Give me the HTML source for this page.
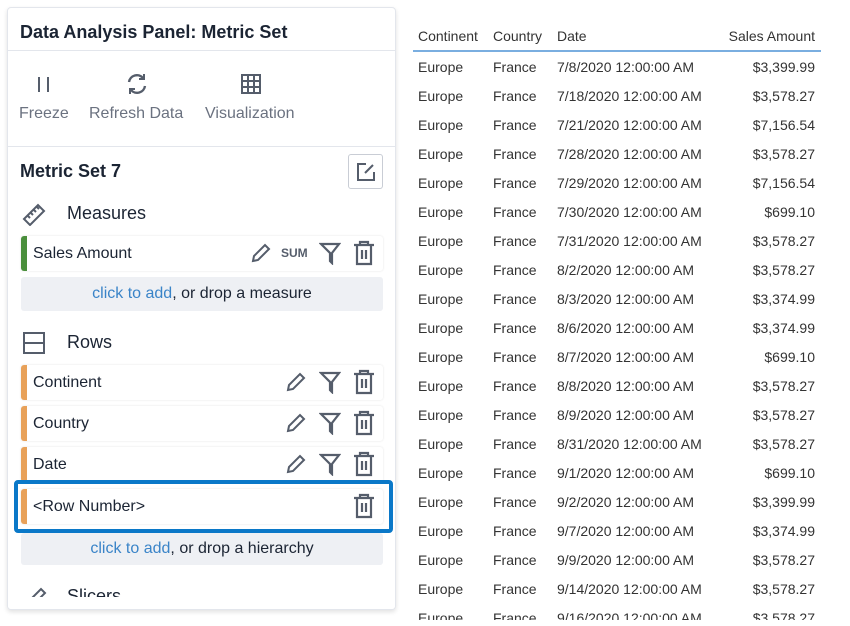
<!DOCTYPE html>
<html><head><style>
*{margin:0;padding:0;box-sizing:border-box}
body{width:850px;height:626px;background:#fff;font-family:"Liberation Sans",sans-serif;position:relative;overflow:hidden;color:#1b2433}
.a{position:absolute;white-space:nowrap}
.panel{position:absolute;left:7px;top:7px;width:389px;height:603px;border:1px solid #e3e6ec;border-radius:4px;background:#fff;box-shadow:0 2px 5px rgba(0,0,0,.12);overflow:hidden}
.item{position:absolute;left:13px;width:362px;height:35px;background:#fff;border-radius:3px;box-shadow:0 0 2px rgba(0,0,0,.12)}
.item .bar{position:absolute;left:0;top:0;width:6px;height:100%;border-radius:3px 0 0 3px;background:#e8a159}
.item .t{position:absolute;left:12px;top:9px;font-size:16px}
.add{position:absolute;left:13px;width:362px;height:34px;background:#eef0f4;border-radius:3px;text-align:center;font-size:16px;line-height:34px;color:#1b2433}
.add span{color:#3a84c8}
.ic{position:absolute}
.tbl td,.tbl th{font-size:14px;color:#333;font-weight:normal;height:29px;padding:0}
</style></head><body>
<div class="panel">
<div class="a" style="left:12px;top:14px;font-size:18px;font-weight:bold">Data Analysis Panel: Metric Set</div>
<div class="a" style="left:0;top:42px;width:389px;height:1px;background:#e3e6ec"></div>
<svg class="ic" style="left:28px;top:68px" width="16" height="18"><path d="M3 1v15M12 1v15" stroke="#555d6b" stroke-width="2"/></svg>
<svg class="ic" style="left:117px;top:64px" width="24" height="24" viewBox="0 0 24 24" fill="none" stroke="#555d6b" stroke-width="2.4"><path d="M4 10a8 8 0 0 1 14-4M20 14a8 8 0 0 1-14 4"/><path d="M19 2v5h-5M5 22v-5h5" stroke-width="2"/></svg>
<svg class="ic" style="left:232px;top:65px" width="22" height="22" viewBox="0 0 22 22" fill="none" stroke="#555d6b" stroke-width="2"><rect x="2" y="2" width="18" height="18"/><path d="M8 2v18M14 2v18M2 8h18M2 14h18"/></svg>
<div class="a" style="left:11px;top:97px;font-size:16px;color:#6b7280">Freeze</div>
<div class="a" style="left:81px;top:97px;font-size:16px;color:#6b7280">Refresh Data</div>
<div class="a" style="left:197px;top:97px;font-size:16px;color:#6b7280">Visualization</div>
<div class="a" style="left:0;top:138px;width:389px;height:1px;background:#e3e6ec"></div>
<div class="a" style="left:12px;top:153px;font-size:18px;font-weight:bold">Metric Set 7</div>
<div class="a" style="left:340px;top:146px;width:35px;height:35px;border:1px solid #c9cdd5;border-radius:3px"></div>
<svg class="ic" style="left:347px;top:153px" width="22" height="22" viewBox="0 0 22 22" fill="none" stroke="#555d6b" stroke-width="2"><path d="M11 3H3v16h16v-8"/><path d="M10 12l8-8"/></svg>
<svg class="ic" style="left:14px;top:194px" width="26" height="24" viewBox="0 0 26 24" fill="none" stroke="#555d6b" stroke-width="2"><path d="M2 17L16 3l6 6L8 23z"/><path d="M6 14l2 2M9 11l2 2M12 8l2 2M15 5l2 2"/></svg>
<div class="a" style="left:59px;top:195px;font-size:18px">Measures</div>
<div class="item" style="top:228px"><div class="bar" style="background:#4a8f3c"></div><div class="t">Sales Amount</div>
<svg class="ic" style="left:229px;top:6px" width="22" height="22" viewBox="0 0 22 22" fill="none" stroke="#555d6b" stroke-width="2"><path d="M3 19l1-5L15 3l4 4L8 18z"/></svg>
<div class="a" style="left:260px;top:10px;font-size:12px;color:#555d6b;font-weight:bold">SUM</div>
<svg class="ic" style="left:298px;top:5px" width="22" height="24" viewBox="0 0 22 24" fill="none" stroke="#555d6b" stroke-width="2.2"><path d="M2 3h18l-7 9v10l-2-2v-8z"/></svg>
<svg class="ic" style="left:332px;top:4px" width="22" height="26" viewBox="0 0 22 26" fill="none" stroke="#555d6b" stroke-width="2.2"><path d="M1 5h20M7 5V2h8v3M4 5v19h14V5M9 10v9M13 10v9"/></svg>
</div>
<div class="add" style="top:269px"><span>click to add</span>, or drop a measure</div>
<svg class="ic" style="left:15px;top:324px" width="22" height="22" viewBox="0 0 22 22" fill="none" stroke="#555d6b" stroke-width="2"><rect x="1" y="1" width="20" height="20"/><path d="M1 11h20"/></svg>
<div class="a" style="left:59px;top:324px;font-size:18px">Rows</div>
<div class="item" style="top:357px"><div class="bar"></div><div class="t">Continent</div>
<svg class="ic" style="left:264px;top:6px" width="22" height="22" viewBox="0 0 22 22" fill="none" stroke="#555d6b" stroke-width="2"><path d="M3 19l1-5L15 3l4 4L8 18z"/></svg>
<svg class="ic" style="left:298px;top:5px" width="22" height="24" viewBox="0 0 22 24" fill="none" stroke="#555d6b" stroke-width="2.2"><path d="M2 3h18l-7 9v10l-2-2v-8z"/></svg>
<svg class="ic" style="left:332px;top:4px" width="22" height="26" viewBox="0 0 22 26" fill="none" stroke="#555d6b" stroke-width="2.2"><path d="M1 5h20M7 5V2h8v3M4 5v19h14V5M9 10v9M13 10v9"/></svg>
</div>
<div class="item" style="top:398px"><div class="bar"></div><div class="t">Country</div>
<svg class="ic" style="left:264px;top:6px" width="22" height="22" viewBox="0 0 22 22" fill="none" stroke="#555d6b" stroke-width="2"><path d="M3 19l1-5L15 3l4 4L8 18z"/></svg>
<svg class="ic" style="left:298px;top:5px" width="22" height="24" viewBox="0 0 22 24" fill="none" stroke="#555d6b" stroke-width="2.2"><path d="M2 3h18l-7 9v10l-2-2v-8z"/></svg>
<svg class="ic" style="left:332px;top:4px" width="22" height="26" viewBox="0 0 22 26" fill="none" stroke="#555d6b" stroke-width="2.2"><path d="M1 5h20M7 5V2h8v3M4 5v19h14V5M9 10v9M13 10v9"/></svg>
</div>
<div class="item" style="top:439px"><div class="bar"></div><div class="t">Date</div>
<svg class="ic" style="left:264px;top:6px" width="22" height="22" viewBox="0 0 22 22" fill="none" stroke="#555d6b" stroke-width="2"><path d="M3 19l1-5L15 3l4 4L8 18z"/></svg>
<svg class="ic" style="left:298px;top:5px" width="22" height="24" viewBox="0 0 22 24" fill="none" stroke="#555d6b" stroke-width="2.2"><path d="M2 3h18l-7 9v10l-2-2v-8z"/></svg>
<svg class="ic" style="left:332px;top:4px" width="22" height="26" viewBox="0 0 22 26" fill="none" stroke="#555d6b" stroke-width="2.2"><path d="M1 5h20M7 5V2h8v3M4 5v19h14V5M9 10v9M13 10v9"/></svg>
</div>
<div class="item" style="top:481px"><div class="bar"></div><div class="t">&lt;Row Number&gt;</div>
<svg class="ic" style="left:332px;top:4px" width="22" height="26" viewBox="0 0 22 26" fill="none" stroke="#555d6b" stroke-width="2.2"><path d="M1 5h20M7 5V2h8v3M4 5v19h14V5M9 10v9M13 10v9"/></svg>
</div>
<div class="a" style="left:6px;top:472px;width:379px;height:53px;border:4px solid #0a78c8;border-radius:4px"></div>
<div class="add" style="top:525px;height:32px;line-height:32px"><span>click to add</span>, or drop a hierarchy</div>
<svg class="ic" style="left:18px;top:578px" width="22" height="22" viewBox="0 0 22 22" fill="none" stroke="#555d6b" stroke-width="2"><path d="M3 19l1-5L15 3l4 4L8 18z"/></svg>
<div class="a" style="left:59px;top:578px;font-size:18px">Slicers</div>
<div class="a" style="left:0;top:589px;width:389px;height:14px;background:#fff"></div>
</div>

<div class="a" style="left:413px;top:22px;width:408px;height:598px;overflow:hidden">
<table class="tbl" style="border-collapse:collapse;width:408px">
<tr style="border-bottom:2px solid #7aaee0"><th style="text-align:left;padding-left:5px;width:80px">Continent</th><th style="text-align:left;width:64px">Country</th><th style="text-align:left">Date</th><th style="text-align:right;padding-right:6px">Sales Amount</th></tr>
</table>
<table class="tbl" style="border-collapse:collapse;width:408px;margin-top:0px">
<tbody>
<tr><td style="padding-left:5px;width:80px">Europe</td><td style="width:64px">France</td><td>7/8/2020 12:00:00 AM</td><td style="text-align:right;padding-right:6px">$3,399.99</td></tr>
<tr><td style="padding-left:5px">Europe</td><td>France</td><td>7/18/2020 12:00:00 AM</td><td style="text-align:right;padding-right:6px">$3,578.27</td></tr>
<tr><td style="padding-left:5px">Europe</td><td>France</td><td>7/21/2020 12:00:00 AM</td><td style="text-align:right;padding-right:6px">$7,156.54</td></tr>
<tr><td style="padding-left:5px">Europe</td><td>France</td><td>7/28/2020 12:00:00 AM</td><td style="text-align:right;padding-right:6px">$3,578.27</td></tr>
<tr><td style="padding-left:5px">Europe</td><td>France</td><td>7/29/2020 12:00:00 AM</td><td style="text-align:right;padding-right:6px">$7,156.54</td></tr>
<tr><td style="padding-left:5px">Europe</td><td>France</td><td>7/30/2020 12:00:00 AM</td><td style="text-align:right;padding-right:6px">$699.10</td></tr>
<tr><td style="padding-left:5px">Europe</td><td>France</td><td>7/31/2020 12:00:00 AM</td><td style="text-align:right;padding-right:6px">$3,578.27</td></tr>
<tr><td style="padding-left:5px">Europe</td><td>France</td><td>8/2/2020 12:00:00 AM</td><td style="text-align:right;padding-right:6px">$3,578.27</td></tr>
<tr><td style="padding-left:5px">Europe</td><td>France</td><td>8/3/2020 12:00:00 AM</td><td style="text-align:right;padding-right:6px">$3,374.99</td></tr>
<tr><td style="padding-left:5px">Europe</td><td>France</td><td>8/6/2020 12:00:00 AM</td><td style="text-align:right;padding-right:6px">$3,374.99</td></tr>
<tr><td style="padding-left:5px">Europe</td><td>France</td><td>8/7/2020 12:00:00 AM</td><td style="text-align:right;padding-right:6px">$699.10</td></tr>
<tr><td style="padding-left:5px">Europe</td><td>France</td><td>8/8/2020 12:00:00 AM</td><td style="text-align:right;padding-right:6px">$3,578.27</td></tr>
<tr><td style="padding-left:5px">Europe</td><td>France</td><td>8/9/2020 12:00:00 AM</td><td style="text-align:right;padding-right:6px">$3,578.27</td></tr>
<tr><td style="padding-left:5px">Europe</td><td>France</td><td>8/31/2020 12:00:00 AM</td><td style="text-align:right;padding-right:6px">$3,578.27</td></tr>
<tr><td style="padding-left:5px">Europe</td><td>France</td><td>9/1/2020 12:00:00 AM</td><td style="text-align:right;padding-right:6px">$699.10</td></tr>
<tr><td style="padding-left:5px">Europe</td><td>France</td><td>9/2/2020 12:00:00 AM</td><td style="text-align:right;padding-right:6px">$3,399.99</td></tr>
<tr><td style="padding-left:5px">Europe</td><td>France</td><td>9/7/2020 12:00:00 AM</td><td style="text-align:right;padding-right:6px">$3,374.99</td></tr>
<tr><td style="padding-left:5px">Europe</td><td>France</td><td>9/9/2020 12:00:00 AM</td><td style="text-align:right;padding-right:6px">$3,578.27</td></tr>
<tr><td style="padding-left:5px">Europe</td><td>France</td><td>9/14/2020 12:00:00 AM</td><td style="text-align:right;padding-right:6px">$3,578.27</td></tr>
<tr><td style="padding-left:5px">Europe</td><td>France</td><td>9/16/2020 12:00:00 AM</td><td style="text-align:right;padding-right:6px">$3,578.27</td></tr>
</tbody></table>
</div>
</body></html>
